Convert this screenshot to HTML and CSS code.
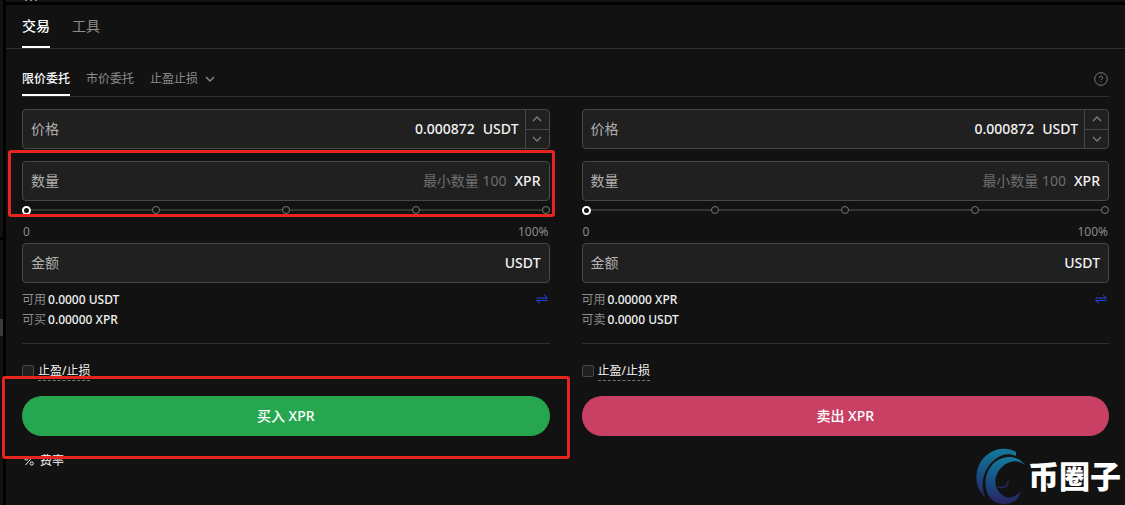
FILE: index.html
```html
<!DOCTYPE html>
<html lang="zh-CN">
<head>
<meta charset="utf-8">
<title>交易 XPR/USDT</title>
<link rel="stylesheet" href="styles.css">
</head>
<body>
<div class="side"><span class="side-a"></span><span class="side-b"></span><span class="side-grip"></span><span class="side-c"></span></div>
<main class="workspace">
  <div class="upper"></div>
  <section class="panel">
    <nav class="tabs">
      <button class="tab active" type="button">交易</button>
      <button class="tab" type="button">工具</button>
    </nav>
    <div class="body">
      <div class="order-types">
        <button class="type active" type="button">限价委托</button>
        <button class="type" type="button">市价委托</button>
        <button class="type" type="button">止盈止损
          <svg class="caret" viewBox="0 0 10 6"><path d="M1 1l4 4 4-4"/></svg>
        </button>
        <button class="help" type="button" aria-label="帮助">
          <svg viewBox="0 0 14 14"><circle cx="7" cy="7" r="6.3"/><path d="M5.3 5.7a1.7 1.6 0 1 1 2.5 1.4c-.6.3-.8.6-.8 1.1M7 9.4v1"/></svg>
        </button>
      </div>
      <div class="forms">
        <form class="form">
          <div class="field">
            <label for="buy-price">价格</label>
            <input id="buy-price" type="text" value="0.000872">
            <span class="unit">USDT</span>
            <div class="stepper">
              <button type="button" aria-label="增加"><svg viewBox="0 0 10 6"><path d="M1 5l4-4 4 4"/></svg></button>
              <button type="button" aria-label="减少"><svg viewBox="0 0 10 6"><path d="M1 1l4 4 4-4"/></svg></button>
            </div>
          </div>
          <div class="quantity">
            <div class="field">
              <label for="buy-qty">数量</label>
              <input id="buy-qty" type="text" placeholder="最小数量 100">
              <span class="unit">XPR</span>
            </div>
            <div class="slider">
              <div class="marks"><i></i><i></i><i></i><i></i><i></i></div>
              <input type="range" min="0" max="100" value="0" aria-label="买入比例">
            </div>
            <span class="highlight highlight-quantity"></span>
          </div>
          <div class="scale"><span>0</span><span>100%</span></div>
          <div class="field">
            <label for="buy-total">金额</label>
            <input id="buy-total" type="text">
            <span class="unit">USDT</span>
          </div>
          <div class="balances">
            <dl>
              <div><dt>可用</dt><dd>0.0000 USDT</dd></div>
              <div><dt>可买</dt><dd>0.00000 XPR</dd></div>
            </dl>
            <button class="swap" type="button" aria-label="划转"><svg viewBox="0 0 12 10"><path d="M.5 4h11L8 .8M11.5 6.4H.5L4 9.4"/></svg></button>
          </div>
          <div class="tpsl"><input id="buy-tpsl" type="checkbox"><label for="buy-tpsl">止盈/止损</label></div>
          <div class="action">
            <button class="submit buy" type="button">买入 XPR</button>
            <span class="highlight highlight-action"></span>
          </div>
        </form>
        <form class="form">
          <div class="field">
            <label for="sell-price">价格</label>
            <input id="sell-price" type="text" value="0.000872">
            <span class="unit">USDT</span>
            <div class="stepper">
              <button type="button" aria-label="增加"><svg viewBox="0 0 10 6"><path d="M1 5l4-4 4 4"/></svg></button>
              <button type="button" aria-label="减少"><svg viewBox="0 0 10 6"><path d="M1 1l4 4 4-4"/></svg></button>
            </div>
          </div>
          <div class="quantity">
            <div class="field">
              <label for="sell-qty">数量</label>
              <input id="sell-qty" type="text" placeholder="最小数量 100">
              <span class="unit">XPR</span>
            </div>
            <div class="slider">
              <div class="marks"><i></i><i></i><i></i><i></i><i></i></div>
              <input type="range" min="0" max="100" value="0" aria-label="卖出比例">
            </div>
          </div>
          <div class="scale"><span>0</span><span>100%</span></div>
          <div class="field">
            <label for="sell-total">金额</label>
            <input id="sell-total" type="text">
            <span class="unit">USDT</span>
          </div>
          <div class="balances">
            <dl>
              <div><dt>可用</dt><dd>0.00000 XPR</dd></div>
              <div><dt>可卖</dt><dd>0.0000 USDT</dd></div>
            </dl>
            <button class="swap" type="button" aria-label="划转"><svg viewBox="0 0 12 10"><path d="M.5 4h11L8 .8M11.5 6.4H.5L4 9.4"/></svg></button>
          </div>
          <div class="tpsl"><input id="sell-tpsl" type="checkbox"><label for="sell-tpsl">止盈/止损</label></div>
          <div class="action">
            <button class="submit sell" type="button">卖出 XPR</button>
          </div>
        </form>
      </div>
      <a class="fees" href="#fees">
        <svg viewBox="0 0 10 10"><circle cx="2.3" cy="2.5" r="1.6"/><circle cx="7.7" cy="7.5" r="1.6"/><path d="M8.5 1l-7 8"/></svg>
        <span>费率</span>
      </a>
    </div>
  </section>
</main>
<div class="watermark">
  <svg viewBox="0 0 52 57">
    <defs><linearGradient id="swirl" x1="0" y1="0" x2="0" y2="1"><stop offset="0" stop-color="#147a9c"/><stop offset=".5" stop-color="#165083"/><stop offset="1" stop-color="#29235f"/></linearGradient></defs>
    <path fill="url(#swirl)" d="M40 4C26-4 6 3 1 23c-2 11 1 20 8 26C5 38 6 25 15 15 23 7 31 4 40 8Z"/>
    <path fill="url(#swirl)" d="M49 17C41 6 25 7 16 17 8 26 7 42 15 51c8 7 20 7 27-1l3-7c-6 7-14 9-20 3-8-7-7-19 0-26 7-8 17-9 24-3Z"/>
    <path fill="none" stroke="#2b2b69" stroke-width="1.3" d="M22 39c5 2 11-1 10-6"/>
  </svg>
  <span>币圈子</span>
</div>
</body>
</html>
```

FILE: styles.css
```css
* { box-sizing: border-box; }

body {
  margin: 0;
  min-height: 100vh;
  display: flex;
  background: #000;
  color: #f2f2f2;
  font: 12px/20px "Noto Sans", "Noto Sans CJK SC", sans-serif;
  overflow: hidden;
}

button, input { font: inherit; color: inherit; }
button { padding: 0; border: 0; background: none; }
svg { display: block; fill: none; stroke: currentColor; }
dl, dd { margin: 0; }

.side { width: 3px; margin-right: 3px; display: flex; flex-direction: column; background: #121212; }
.side-a { height: 240px; border-bottom: 3px solid #000; }
.side-b { height: 79px; }
.side-grip { height: 17px; background: #3a3a3a; }

.workspace { flex: 1; min-width: 0; display: flex; flex-direction: column; }
.upper {
  height: 2px;
  margin-bottom: 3px;
  background: repeating-linear-gradient(90deg, #888 0 2px, #121212 2px 5px) 19px 0 / 15px 1px no-repeat #121212;
}
.panel { flex: 1; background: #121212; }

.tabs {
  height: 44px;
  padding: 0 16px;
  display: flex;
  gap: 22px;
  border-bottom: 1px solid #2e2e2e;
}
.tab { font-size: 14px; color: #8c8c8c; border-bottom: 2px solid transparent; }
.tab.active { color: #fff; font-weight: 500; border-color: #fff; }

.body { padding: 12px 16px; }

.order-types {
  height: 36px;
  display: flex;
  gap: 16px;
  border-bottom: 1px solid #2e2e2e;
}
.type { display: flex; align-items: center; gap: 7px; padding-top: 2px; color: #8c8c8c; border-bottom: 2px solid transparent; }
.type.active { color: #fff; font-weight: 500; border-color: #fff; }
.caret { width: 10px; height: 6px; stroke-width: 1.4; }
.help { margin-left: auto; padding-right: 1px; color: #7a7a7a; }
.help svg { width: 14px; height: 14px; }

.forms { display: grid; grid-template-columns: 1fr 1fr; gap: 32px; padding-top: 12px; }
.form { min-width: 0; }

.field {
  height: 40px;
  display: flex;
  align-items: center;
  gap: 8px;
  padding-left: 8px;
  border: 1px solid #484848;
  border-radius: 4px;
  background: #202020;
  font-size: 14px;
  overflow: hidden;
}
.field label { color: #b0b0b0; }
.field input {
  flex: 1;
  min-width: 0;
  padding: 0;
  border: 0;
  outline: 0;
  background: none;
  text-align: right;
  font-weight: 500;
}
.field input::placeholder { color: #6e6e6e; opacity: 1; font-weight: 400; }
.unit { padding-right: 8px; font-weight: 500; }
.unit:has(+ .stepper) { padding-right: 0; margin-right: -2px; }

.stepper {
  align-self: stretch;
  width: 24px;
  display: flex;
  flex-direction: column;
  border-left: 1px solid #484848;
  color: #7a7a7a;
}
.stepper button { flex: 1; display: grid; place-items: center; }
.stepper button + button { border-top: 1px solid #484848; }
.stepper svg { width: 10px; height: 6px; stroke-width: 1.4; }

.quantity { position: relative; margin-top: 12px; }

.slider { display: grid; align-items: center; height: 16px; padding-top: 2px; }
.slider > * { grid-area: 1 / 1; }
.marks {
  display: flex;
  justify-content: space-between;
  background: linear-gradient(#333, #333) center / 100% 2px no-repeat;
}
.marks i { width: 8px; height: 8px; border: 1px solid #777; border-radius: 50%; background: #121212; }
.slider input { appearance: none; width: 100%; height: 10px; margin: 0; background: none; }
.slider input::-webkit-slider-thumb {
  appearance: none;
  width: 9px;
  height: 9px;
  border: 2px solid #fff;
  border-radius: 50%;
  background: #121212;
}

.scale {
  display: flex;
  justify-content: space-between;
  padding: 5px 1px 1px;
  color: #8c8c8c;
}

.balances {
  display: flex;
  justify-content: space-between;
  padding: 7px 0 13px;
  border-bottom: 1px solid #2e2e2e;
}
.balances dl > div { display: flex; gap: 2px; }
.balances dt { color: #8c8c8c; }
.balances dd { font-weight: 500; }
.swap { align-self: flex-start; margin: 4px 2px 0 0; color: #2946e8; }
.swap svg { width: 12px; height: 10px; }

.tpsl { display: flex; align-items: center; gap: 4px; padding: 17px 0 15px; }
.tpsl input {
  appearance: none;
  width: 12px;
  height: 12px;
  margin: 0;
  border: 1px solid #484848;
  border-radius: 2px;
  background: #202020;
}
.tpsl label { height: 20px; border-bottom: 1px dashed #777; }

.action { position: relative; }
.submit { display: block; width: 100%; height: 40px; border-radius: 20px; font-size: 14px; font-weight: 500; color: #fff; }
.buy { background: #26a64f; }
.sell { background: #c94065; }

.highlight { position: absolute; border: 3px solid #e6251e; border-radius: 3px; pointer-events: none; }
.highlight-quantity { inset: -11px -5px 0 -14px; }
.highlight-action { inset: -20px -20px -23px; }

.fees { display: inline-flex; align-items: center; gap: 6px; padding: 15px 0 0 2px; color: inherit; text-decoration: none; }
.fees svg { width: 10px; height: 10px; }

.watermark {
  position: absolute;
  right: 4px;
  bottom: 0;
  display: flex;
  align-items: center;
  color: #fff;
  font: 900 31px/40px "Noto Sans CJK SC", sans-serif;
}
.watermark svg { width: 52px; height: 57px; stroke: none; }
.watermark span { padding-bottom: 4px; }
```
